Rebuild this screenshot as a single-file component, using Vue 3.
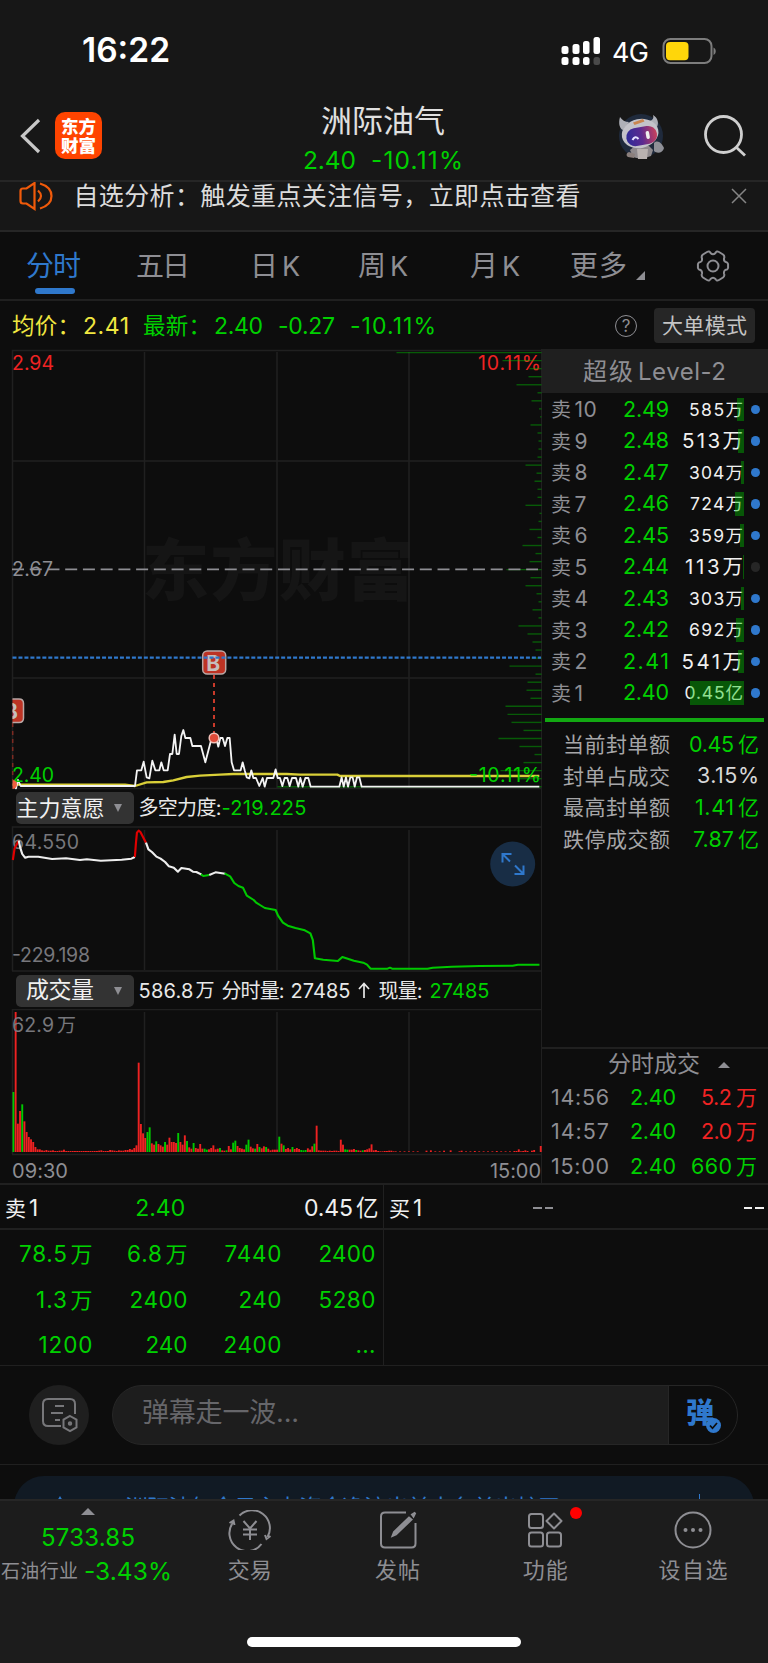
<script setup>
// Tracks a label so that it fills the given width exactly.
const vFit = {
  mounted(el, { value }) {
    const n = [...el.textContent.trim()].length
    const gap = n > 1 ? (value - el.getBoundingClientRect().width) / (n - 1) : 0
    el.style.letterSpacing = gap + 'px'
    el.style.marginRight = -gap + 'px'
  }
}

const asks = [
  { n: '10', p: '2.49', q: '585', u: '万', w: 54, bar: 7, small: true, on: true },
  { n: '9', p: '2.48', q: '513', u: '万', w: 61, bar: 6, small: false, on: true },
  { n: '8', p: '2.47', q: '304', u: '万', w: 54, bar: 3.5, small: true, on: true },
  { n: '7', p: '2.46', q: '724', u: '万', w: 53, bar: 9, small: true, on: true },
  { n: '6', p: '2.45', q: '359', u: '万', w: 54, bar: 4, small: true, on: true },
  { n: '5', p: '2.44', q: '113', u: '万', w: 58, bar: 1, small: false, on: false },
  { n: '4', p: '2.43', q: '303', u: '万', w: 54, bar: 3.5, small: true, on: true },
  { n: '3', p: '2.42', q: '692', u: '万', w: 54, bar: 8, small: true, on: true },
  { n: '2', p: '2.41', q: '541', u: '万', w: 61.5, bar: 6, small: false, on: true },
  { n: '1', p: '2.40', q: '0.45', u: '亿', w: 58.5, bar: 54, small: true, on: true }
]
const stats = [
  { k: '当前封单额', v: '0.45', u: '亿', w: 45, c: 'green' },
  { k: '封单占成交', v: '3.15%', u: '', w: 62, c: 'light' },
  { k: '最高封单额', v: '1.41', u: '亿', w: 39, c: 'green' },
  { k: '跌停成交额', v: '7.87', u: '亿', w: 41, c: 'green' }
]
const trades = [
  { t: '14:56', q: '5.2', w: 31, c: 'red' },
  { t: '14:57', q: '2.0', w: 31, c: 'red' },
  { t: '15:00', q: '660', w: 41, c: 'green' }
]
const orders = [
  { v: '78.5', u: '万', w: 48 }, { v: '6.8', u: '万', w: 35 }, { v: '7440', u: '', w: 57 }, { v: '2400', u: '', w: 57 },
  { v: '1.3', u: '万', w: 31 }, { v: '2400', u: '', w: 58 }, { v: '240', u: '', w: 43 }, { v: '5280', u: '', w: 57 },
  { v: '1200', u: '', w: 54 }, { v: '240', u: '', w: 42 }, { v: '2400', u: '', w: 58 }, { v: '...', u: '', w: 20 }
]

// Volume-at-price bar lengths, top price to bottom price.
const profile = [145, 39, 12, 13, 25, 4, 10, 2.5, 1.5, 11, 4, 3, 3, 4, 16, 5, 7, 4, 4, 16, 2, 3, 12, 4, 19, 6, 12, 35, 11, 16, 5, 3, 9, 3, 23, 14, 9, 6, 10, 32, 6, 14, 15, 11, 36, 34, 30, 18, 43, 22, 7, 18, 41, 23, 264]

// Minute volumes: slot, height, rising or falling.
const raw = '0g180 1r420 2r85 3r123 4g143 5r92 6r60 7r45 8r38 9r30 10r15 11r8 12r8 13r5 14r4 15r6 16r4 17r4 18r5 19r3 20r3 21r4 22r4 23r7 24r3 25r3 26r3 27r3 28r3 29r3 30r3 31r3 32r3 33r3 34r3 35r3 36r3 37r3 38r3 39r4 40r5 41r3 42r3 43r3 44r6 45r5 46r4 47r3 48r5 49r4 50r4 51r6 52r6 53r9 54r7 55r12 56r20 57r268 58r84 59r56 60r42 61g60 62g74 63r26 64r22 65g32 66r24 67r20 68r16 69g30 70r22 71r43 72r30 73r30 74r27 75g57 76r30 77r22 78r50 79g33 80r14 81r10 82g27 83r12 84r10 85r24 86r10 87g10 88g7 89r8 90r12 91r20 92r8 93r10 94g12 95r5 96r4 97g5 98r18 99r8 100g28 101g34 102r18 103r12 104r10 105r8 106g22 107g37 108r16 109r11 110g10 111r24 112g15 113r11 114r17 115g15 116r10 117r5 118r7 119r7 120r7 121g46 122r25 123g20 124r9 125r12 126r8 127g15 128r9 129r12 130r9 131g6 132g5 133g6 134r11 135r7 136r17 137g25 138r79 139r5 140r4 141r4 142r4 143r3 144r4 145r3 146r4 147r4 148r3 149r37 150r22 151g8 152g7 153r7 154r7 155r9 156g6 157r5 158r4 159g5 160r6 161r8 162r11 163r23 164r5 165r6 166r3 167r2 168r2 169r3 170r3 171r4 172r4 173r2 174r2 176r2 178r2 180r2 182r2 184r2 188r4 190r5 192r2 194r2 196r4 199r5 203r2 204r4 206r2 208r2 210r3 212r2 214r2 216r2 218r2 220r3 222r2 224r2 226r2 228r3 229r3 230r8 231r2 232r3 233r5 234r3 236r4 237r6 240r18'
const volumes = raw.split(' ').map((s) => {
  const m = s.match(/(\d+)([rg])(\d+)/)
  return { x: 12.5 + m[1] * 2.197, h: m[3] / 3, up: m[2] === 'r' }
})
</script>

<template>
  <div class="screen">
    <div class="status">
      <span class="clock" v-fit="87">16:22</span>
      <svg class="signal" width="42" height="30" viewBox="560 36 42 30">
        <g fill="#fff">
          <rect x="561.500" y="46" width="7" height="8" rx="2.500" /><rect x="572.500" y="44" width="7" height="10" rx="2.500" />
          <rect x="583" y="41" width="6.500" height="13" rx="2.500" /><rect x="593.500" y="37" width="6.500" height="17" rx="2.500" />
          <rect x="561.500" y="57" width="7" height="8" rx="2.500" /><rect x="572.500" y="57" width="7" height="8" rx="2.500" />
          <rect x="583" y="57" width="6.500" height="8" rx="2.500" />
        </g>
        <rect x="593.500" y="57" width="6.500" height="8" rx="2.500" fill="#4a4a4a" />
      </svg>
      <span class="net" v-fit="37">4G</span>
      <svg class="battery" width="56" height="28" viewBox="662 37 56 28">
        <rect x="663.500" y="39" width="48" height="24" rx="7" fill="none" stroke="#7d7d7d" stroke-width="2" />
        <rect x="666" y="42" width="22.500" height="18.300" rx="4" fill="#ffd60a" />
        <path d="M713.500 47.500c3 1.500 3 6 0 7.500z" fill="#7d7d7d" />
      </svg>
    </div>

    <header class="header">
      <svg class="back" width="22" height="40" viewBox="20 116 22 40"><path d="M39 120 22.500 136 39 152" fill="none" stroke="#c8c8c8" stroke-width="3.200" /></svg>
      <div class="logo"><span>东方</span><span>财富</span></div>
      <div class="title">
        <span class="name" v-fit="124">洲际油气</span>
        <span class="quote green"><span v-fit="53">2.40</span><span v-fit="92">-10.11%</span></span>
      </div>
      <svg class="robot" width="50" height="50" viewBox="616 111 50 50">
        <circle cx="641" cy="136" r="22" fill="#1f2a3c" />
        <path d="M630 150l5-4h14l4 4-2 6q-10 4-18 1z" fill="#8f8a8d" />
        <path d="M637 149h11l-1 10h-9z" fill="#b9b2b0" />
        <path d="M629 152c-3 1-3 4-1 5l6 1 1-4z" fill="#8b7f7c" />
        <path d="M654 143c4-4 8 1 10 5-1 5-7 6-10 3z" fill="#8f9097" />
        <path d="M620 117c-2 7 0 12 3 13l6-8c-4 0-7-2-9-5z" fill="#aeb0b8" />
        <path d="M653 115c5 3 6 8 4 12l-7-6c3-1 4-3 3-6z" fill="#aeb0b8" />
        <ellipse cx="640" cy="133.500" rx="18.500" ry="14.500" transform="rotate(-12 640 133)" fill="#c3c3ca" />
        <rect x="626" y="127" width="31" height="18" rx="9" transform="rotate(-10 642 135)" fill="url(#visor)" />
        <path d="M633 122.500l10-3.500 1.500 2.500-10 3.500z" fill="#c98550" />
        <path d="M632.500 140q2.500-5 6-1" fill="none" stroke="#e6e0ff" stroke-width="2" />
        <rect x="646" y="131" width="3.500" height="8" rx="1.700" transform="rotate(-10 648 135)" fill="#eee" />
        <defs><linearGradient id="visor"><stop offset="0" stop-color="#2e2b98" /><stop offset=".5" stop-color="#5b2a90" /><stop offset="1" stop-color="#c8405c" /></linearGradient></defs>
      </svg>
      <svg class="search" width="46" height="46" viewBox="702 112 46 46" fill="none" stroke="#cfcfcf" stroke-width="2.800"><circle cx="723.500" cy="134.500" r="18" /><path d="m736 147 9 8.500" /></svg>
    </header>

    <div class="notice">
      <svg width="34" height="30" viewBox="19 182 34 30" fill="none" stroke="#f05a0a" stroke-width="2.200">
        <path d="M34.500 183v26l-8-5.500h-3.500q-2.500 0-2.500-2.500v-10q0-2.500 2.500-2.500h3.500z" /><path d="M38 190.500q6 5.500 0 11M40 183.500q11.500 3.500 11.500 12.500T40 208.500" />
      </svg>
      <span class="msg" v-fit="507">自选分析：触发重点关注信号，立即点击查看</span>
      <svg width="16" height="16" viewBox="0 0 16 16" stroke="#858585" stroke-width="1.500"><path d="M1 1l14 14M15 1 1 15" /></svg>
    </div>

    <nav class="tabs">
      <span class="tab active"><span v-fit="55">分时</span></span>
      <span class="tab t2"><span v-fit="54">五日</span></span>
      <span class="tab t3">日<b>K</b></span>
      <span class="tab t4">周<b>K</b></span>
      <span class="tab t5">月<b>K</b></span>
      <span class="tab t6"><span v-fit="57">更多</span></span>
      <svg class="corner" width="9" height="9" viewBox="0 0 9 9"><path d="M9 0v9H0z" fill="#8e8e93" /></svg>
      <svg class="gear" width="36" height="34" viewBox="-18 -17 36 34" fill="none" stroke="#8e8e93" stroke-width="2">
        <path d="M-6-14Q-3.500-15.500-2.500-13 0-10.500 2.500-13 3.500-15.500 6-14L10-11.500Q12-10 11-7.500 10.500-4 14-3.500 15.500-2.500 15 0 15.500 2.500 14 3.500 10.500 4 11 7.500 12 10 10 11.500L6 14Q3.500 15.500 2.500 13 0 10.500-2.500 13-3.500 15.500-6 14L-10 11.500Q-12 10-11 7.500-10.500 4-14 3.500-15.500 2.500-15 0-15.500-2.500-14-3.500-10.500-4-11-7.500-12-10-10-11.500Z" />
        <circle r="5.500" />
      </svg>
    </nav>

    <div class="summary">
      <span class="yellow c1"><span v-fit="68">均价：</span></span>
      <span class="yellow c2"><span v-fit="46">2.41</span></span>
      <span class="green c3"><span v-fit="68">最新：</span></span>
      <span class="green c4"><span v-fit="49">2.40</span></span>
      <span class="green c5"><span v-fit="57">-0.27</span></span>
      <span class="green c6"><span v-fit="86">-10.11%</span></span>
      <span class="help">?</span>
      <span class="mode"><span v-fit="85">大单模式</span></span>
    </div>

    <main class="market">
      <section class="charts">
        <svg class="price" width="542" height="441" viewBox="0 349 542 441">
          <text class="mark" x="142" y="595" textLength="272">东方财富</text>
          <g class="grid"><path d="M12.500 789V350.500H541M12 461H541M12 678H541M144.500 352V788M277 352V788M409 352V788M12 788.500H541" /></g>
          <g class="axis">
            <text x="12" y="369.500" textLength="42" fill="#f02323">2.94</text>
            <text x="478" y="369.500" textLength="63" fill="#f02323">10.11%</text>
            <text x="12" y="575.500" textLength="41" fill="#8e8e93">2.67</text>
          </g>
          <g stroke="#00c800" stroke-opacity=".42" stroke-width="1.400">
            <path v-for="(w, i) in profile" :key="i" :d="`M${541.5 - w} ${352.6 + i * 8.039}H541.5`" />
          </g>
          <path d="M12 569.300H538" stroke="#8e8e93" stroke-width="1.700" stroke-dasharray="12 5.730" />
          <path d="M214 675V733" stroke="#c93a2a" stroke-width="2" stroke-dasharray="4 4" />
          <path d="M12.700 723V780" stroke="#7d2a22" stroke-width="1.500" stroke-dasharray="4 4" />
          <g transform="translate(0 600) scale(.33333)" fill="none" stroke-linejoin="round">
            <path d="M38 554H375L405 558 440 547 490 546 520 541 560 531 600 527 660 524 700 522H860L900 524H1012L1020 528H1618" stroke="#d9cf38" stroke-width="7" />
            <path d="M42 558 48 565 54 540 62 558H405L411 511H424L431 485 440 532 448 535 457 482 466 511H478L484 487 491 511H503L510 462H517L524 404 530 462H537L544 408 550 390 556 414H571L577 438H603L616 487 632 425 642 414 650 420 655 440 661 414H668L675 438 682 414H689L695 487 702 511H722L728 487 734 511 740 532 748 535 754 511 760 534H768L778 558 788 534 794 560 801 534H820L827 508 833 534H840L847 558 854 534H862L869 558 876 534H888L895 560 901 534 908 560 916 534 925 534 932 560H940L945 560H1018L1025 532 1031 560 1038 532 1044 560 1051 532H1058L1064 560 1071 532H1078L1085 560H1618" stroke="#f4f4f4" stroke-width="5.500" />
          </g>
          <g class="axis">
            <text x="12" y="781.500" textLength="42" fill="#00d000">2.40</text>
            <text x="469" y="781.500" textLength="72" fill="#00d000">-10.11%</text>
          </g>
          <g stroke="#b9a7a5" stroke-width="1.500" fill="#bd3324">
            <rect x="202.700" y="651" width="23" height="23" rx="4.500" />
            <path d="M12.500 699H19q4.500 0 4.500 4.500v14.500q0 4.500-4.500 4.500H12.500" />
            <circle cx="214" cy="738" r="4.800" fill="#e04a38" stroke="#f0c0b8" />
            <path d="M12.500 780a4.500 4.500 0 0 1 0 9z" fill="#f06040" stroke="none" />
          </g>
          <clipPath id="plot"><rect x="12.500" y="650" width="500" height="120" /></clipPath>
          <g class="badge" clip-path="url(#plot)"><text x="206.300" y="671">B</text><text x="4" y="719">B</text></g>
          <path d="M12.500 657.700H541" stroke="#2f78cc" stroke-width="2.300" stroke-dasharray="4 1.970" />
        </svg>

        <div class="bar-row">
          <span class="select"><span class="zl" v-fit="88">主力意愿</span><i></i></span>
          <span class="info"><span v-fit="83">多空力度:</span><span class="green" v-fit="85">-219.225</span></span>
        </div>

        <svg class="force" width="542" height="146" viewBox="0 826 542 146">
          <g class="grid"><path d="M12.500 971V827H541M144.500 830V970M277 830V970M409 830V970M12 971H541" /></g>
          <g class="axis" fill="#77777c"><text x="12" y="849" textLength="67">64.550</text><text x="12" y="962" textLength="78">-229.198</text></g>
          <g transform="translate(0 790) scale(.34758 .33333)" fill="none" stroke-width="6.200" stroke-linejoin="round">
            <path d="M37 210 42 175 54 152" stroke="#e00000" />
            <path d="M54 152 58 172 64 192 72 203 82 200 110 200 150 207 190 205 230 210 250 208 290 212 350 209 378 206 388 201" stroke="#eee" />
            <path d="M388 201 391 160 394 128 399 122 404 126 420 158" stroke="#e00000" />
            <path d="M420 158 427 178 437 186 450 200 462 206 475 216 486 229 500 233 512 245 522 234 545 238 555 245 565 246 580 254" stroke="#eee" />
            <path d="M578 253 585 258 602 255" stroke="#00c800" />
            <path d="M602 255 620 247 648 251" stroke="#eee" />
            <path d="M646 250 662 259 674 279 686 288 699 293 710 317 730 330 737 338 748 345 762 354 793 360 800 377 814 398 828 407 850 414 877 421 893 430 900 450 906 505 930 509 972 513 985 501 1018 512 1045 518 1056 524 1066 536H1115L1122 533 1128 536H1230L1245 533 1300 530 1380 528 1475 527 1490 524 1552 524" stroke="#00c800" />
          </g>
          <circle cx="512.700" cy="864" r="22.500" fill="#182d45" />
          <path d="M502.500 862.500v-8.500h9M503 854.500l7 7M523.500 865.500v8.500h-9M523 873.500l-8-8" fill="none" stroke="#2f78cc" stroke-width="2" />
        </svg>

        <div class="bar-row second">
          <span class="select"><span class="cj" v-fit="68">成交量</span><i></i></span>
          <span class="info vol">
            <span v-fit="55">586.8</span><span class="v1">万</span><span class="v2" v-fit="63">分时量:</span>
            <span class="v3" v-fit="60">27485</span><svg class="up" width="14" height="17" viewBox="0 0 14 17" fill="none" stroke="#e8e8e8" stroke-width="1.700"><path d="M7 16V2M2 7 7 1.500 12 7" /></svg>
            <span class="v4" v-fit="44">现量:</span><span class="v5 green" v-fit="60">27485</span>
          </span>
        </div>

        <svg class="volume" width="542" height="147" viewBox="0 1009 542 147">
          <g class="grid"><path d="M12.500 1154V1009.500H541M144.500 1012V1152M277 1012V1152M409 1012V1152M12 1154.500H541" /></g>
          <rect v-for="v in volumes" :key="v.x" :x="v.x" :y="1152 - v.h" width="1.900" :height="v.h" :fill="v.up ? '#ee2222' : '#00c800'" />
          <g class="axis" fill="#77777c"><text x="12" y="1031.500" textLength="42">62.9</text><text class="wan" x="57" y="1032">万</text></g>
        </svg>
        <div class="times"><span v-fit="56">09:30</span><span v-fit="51">15:00</span></div>
      </section>

      <aside class="book">
        <div class="level"><span v-fit="50">超级</span><span class="lv" v-fit="88">Level-2</span></div>
        <div v-for="a in asks" :key="a.n" class="ask">
          <span class="lab">卖<b>{{ a.n }}</b></span>
          <span class="p green"><span v-fit="46">{{ a.p }}</span></span>
          <span class="q" :class="{ small: a.small }"><span v-fit="a.w">{{ a.q }}{{ a.u }}</span><i class="depth" :style="{ width: a.bar + 'px' }"></i></span>
          <i class="dot" :class="{ off: !a.on }"></i>
        </div>
        <div class="limit"></div>
        <div v-for="s in stats" :key="s.k" class="stat">
          <span class="k" v-fit="107">{{ s.k }}</span>
          <span class="v" :class="s.c"><span v-fit="s.w">{{ s.v }}</span><em v-if="s.u">{{ s.u }}</em></span>
        </div>
        <div class="trades">
          <div class="thead"><span v-fit="92">分时成交</span><i></i></div>
          <div v-for="t in trades" :key="t.t" class="trade">
            <span class="t"><span v-fit="58">{{ t.t }}</span></span>
            <span class="tp green"><span v-fit="46">2.40</span></span>
            <span class="tq" :class="t.c"><span v-fit="t.w">{{ t.q }}</span><em>万</em></span>
          </div>
        </div>
      </aside>
    </main>

    <section class="queue">
      <div class="side left">
        <div class="qhead">
          <span class="ql">卖<b>1</b></span><span class="green qp"><span v-fit="50">2.40</span></span>
          <span class="qq"><span v-fit="49">0.45</span><em>亿</em></span>
        </div>
        <div class="cells green">
          <span v-for="(o, i) in orders" :key="i"><span v-fit="o.w">{{ o.v }}</span><em v-if="o.u">{{ o.u }}</em></span>
        </div>
      </div>
      <div class="side">
        <div class="qhead"><span class="ql">买<b>1</b></span><span class="none"><i></i><i></i></span><span class="none bright"><i></i><i></i></span></div>
      </div>
    </section>

    <section class="chat">
      <div class="round">
        <svg width="38" height="36" viewBox="0 0 38 36" fill="none" stroke="#77777a" stroke-width="2">
          <path d="M34 17V7q0-5-5-5H7Q2 2 2 7v17q0 5 5 5h13M14 9h9M10 16h12M14 23h5" />
          <path d="m29 19 6.500 3.700v7.600L29 34l-6.500-3.700v-7.600z" /><circle cx="29" cy="26.500" r="1.200" />
        </svg>
      </div>
      <div class="field"><span class="hint" v-fit="157">弹幕走一波...</span>
        <span class="send">弹<svg width="15" height="15" viewBox="0 0 15 15"><circle cx="7.500" cy="7.500" r="7.500" fill="#2f78cc" /><path d="m4 7.500 2.500 2.800L11 5" fill="none" stroke="#0d0d0d" stroke-width="1.700" /></svg></span>
      </div>
    </section>

    <section class="feed"><div class="card"><i class="pin"></i><span class="headline" v-fit="436">洲际油气今日主力资金净流出前十名单出炉了</span><b></b></div></section>

    <footer class="dock">
      <div class="index">
        <i></i>
        <span class="num green" v-fit="94">5733.85</span>
        <div class="sector"><span v-fit="77">石油行业</span><span class="chg green" v-fit="88">-3.43%</span></div>
      </div>
      <div class="item">
        <svg width="44" height="40" viewBox="-22 -20 44 40" fill="none" stroke="#8e8e93" stroke-width="2">
          <path d="M-10.500-14.500A17.800 17.800 0 0 1 17.500 7M11.500 14A17.800 17.800 0 0 1-17-7.500M-20.500-7l4-2.500 1 4.500M20.500 6l-4 3-1.500-4M-6.500-9 0-1.500 6.500-9M0-1.500V10M-7-.5H7M-7 4.500H7" />
        </svg><span v-fit="44">交易</span>
      </div>
      <div class="item">
        <svg width="44" height="40" viewBox="-22 -20 44 40" fill="none" stroke="#8e8e93" stroke-width="2">
          <path d="M8-17.500H-13q-4 0-4 4v27q0 4 4 4h26.500q4 0 4-4V-7" /><path d="m11-12.500 2.500 2L-2 4.500l-3.500 1.500 1.500-4z" fill="#8e8e93" /><path d="m14-15.500 2.500-1.500.500.500-1.500 3z" fill="#8e8e93" />
        </svg><span v-fit="45">发帖</span>
      </div>
      <div class="item">
        <svg width="44" height="40" viewBox="-22 -20 44 40" fill="none" stroke="#8e8e93" stroke-width="2">
          <rect x="-16" y="-16" width="14" height="14" rx="2.500" /><rect x="-16" y="2.500" width="14" height="14" rx="2.500" /><rect x="2" y="2.500" width="14" height="14" rx="2.500" /><path d="m9-16.500 7.500 7.500L9-1.500 1.500-9z" stroke-linejoin="round" />
        </svg><i class="alert"></i><span v-fit="45">功能</span>
      </div>
      <div class="item">
        <svg width="44" height="40" viewBox="-22 -20 44 40" fill="none" stroke="#8e8e93" stroke-width="2"><circle r="17.500" /><g fill="#8e8e93" stroke="none"><circle cx="-7.500" r="2" /><circle r="2" /><circle cx="7.500" r="2" /></g></svg><span v-fit="69">设自选</span>
      </div>
      <div class="home"></div>
    </footer>
  </div>
</template>

<style>
body { background: #0d0d0d; }
</style>

<style scoped>
.screen { width: 768px; height: 1663px; overflow: hidden; background: #0d0d0d; color: #e8e8e8; font-family: Inter, "Noto Sans CJK SC", sans-serif; line-height: 1; display: flex; flex-direction: column; white-space: nowrap; }
.screen span { display: inline-block; }
.screen > * { flex: none; box-sizing: border-box; }
em, i { font-style: normal; }
b { font-weight: 400; }
.screen .green { color: #00d000; }
.screen .red { color: #f02323; }
.yellow { color: #f0e640; }
.light { color: #d8d8d8; }

.status { height: 100px; background: #171717; display: flex; align-items: center; padding: 2px 0 0 82px; }
.clock { font-size: 33.500px; font-weight: 600; color: #fff; width: 87px; }
.signal { margin-left: 391px; }
.net { font-size: 27px; font-weight: 400; color: #fff; margin-left: 10px; padding-top: 3px; }
.battery { margin-left: auto; margin-right: 50px; }

.header { height: 80px; background: #171717; display: flex; align-items: center; padding: 0 20px; }
.back { margin-top: -8px; }
.logo { width: 47px; height: 47px; border-radius: 10px; background: #ff4400; margin: -9px 0 0 13px; display: flex; flex-direction: column; align-items: center; justify-content: center; font-weight: 900; font-size: 17.500px; line-height: 19px; color: #fff; }
.title { flex: 1; display: flex; flex-direction: column; align-items: center; padding-left: 48px; }
.name { font-size: 31px; line-height: 36px; color: #e0e0e0; margin-top: -2px; }
.quote { font-size: 24.500px; line-height: 30px; display: flex !important; gap: 15px; margin-top: 6px; }
.robot { margin: -8px 36px 0 0; }
.search { margin-top: -10px; }

.notice { height: 52px; background: #171717; border-top: 2px solid #262626; border-bottom: 2px solid #262626; display: flex; align-items: flex-start; padding: 0 21px 0 19px; }
.notice svg:last-child { margin: 6px 0 0 auto; }
.msg { font-size: 25px; line-height: 28px; margin-left: 20.500px; color: #dcdcdc; }

.tabs { height: 69px; border-bottom: 2px solid #202020; display: flex; align-items: flex-start; padding: 19px 0 0 26px; color: #8e8e93; font-size: 28px; line-height: 30px; }
.tabs b { margin-left: 4px; font-size: 27px; }
.tab { position: relative; }
.active { color: #2f78cc; width: 110px; }
.active::after { content: ""; position: absolute; left: 9px; top: 37px; width: 40px; height: 6px; border-radius: 3px; background: #2f78cc; }
.t2 { width: 114px; }
.t3 { width: 108px; }
.t4 { width: 112px; }
.t5 { width: 100px; }
.t6 { width: 66px; }
.corner { margin-top: 20px; }
.gear { margin: -2px 0 0 50px; }

.summary { height: 48px; display: flex; align-items: center; padding: 2px 0 0 12px; font-size: 23px; }
.c1 { width: 71px; }
.c2 { width: 60px; }
.c3 { width: 71px; }
.c4 { width: 64px; }
.c5 { width: 72px; }
.c1, .c3 { font-size: 22.500px; }
.help { width: 20px; height: 20px; border: 1.500px solid #8e8e93; border-radius: 50%; color: #8e8e93; font-size: 17px; line-height: 21px; text-align: center; margin: -1px 0 0 auto; }
.mode { width: 101px; height: 35px; border-radius: 4px; background: #262626; color: #c4c4c4; font-size: 21px; line-height: 35px; text-align: center; margin: -1px 13px 0 17px; }

.market { height: 836px; display: flex; border-bottom: 2px solid #202020; }
.charts { width: 542px; box-sizing: border-box; border-right: 1px solid #202020; display: flex; flex-direction: column; }
.charts > svg { display: block; flex: none; }
.grid { fill: none; stroke: #202020; stroke-width: 1.500; }
.axis { font-size: 19.500px; }
.wan { font-size: 19px; }
.mark { font-size: 67px; font-weight: 900; fill: #151515; }
.badge { font-size: 21px; font-weight: 700; fill: #c6bebc; }
.bar-row { height: 36px; flex: none; display: flex; align-items: center; padding-left: 16px; }
.second { height: 37px; }
.select { width: 118px; height: 32px; border-radius: 5px; background: #333; display: flex !important; align-items: center; color: #f0f0f0; font-size: 22px; box-sizing: border-box; position: relative; }
.select i { position: absolute; left: 98px; top: 12px; border: 4.500px solid transparent; border-top: 8px solid #8e8e93; border-bottom: 0; }
.zl { margin-left: .500px; }
.cj { margin-left: 10px; font-size: 23px; }
.info { display: flex !important; align-items: center; margin-left: 4.500px; font-size: 20px; }
.v1 { font-size: 19px; margin-left: 2px; }
.v2 { margin-left: 7px; }
.v3 { margin-left: 6px; }
.up { margin-left: 6px; }
.v4 { margin-left: 8px; }
.v5 { margin-left: 7px; }
.times { display: flex; justify-content: space-between; padding: 5px 0 0 12px; font-size: 20px; color: #8e8e93; }

.book { width: 226px; display: flex; flex-direction: column; }
.level { height: 44px; background: #1f1f1f; color: #8e8e93; font-size: 24px; display: flex; align-items: center; padding: 2px 0 0 41px; box-sizing: border-box; flex: none; margin-bottom: .800px; }
.lv { margin-left: 5px; }
.ask { height: 31.500px; flex: none; display: flex; align-items: center; padding-left: 9px; }
.lab { width: 72px; color: #8e8e93; font-size: 20px; }
.lab b { font-size: 21px; margin-left: 3.500px; letter-spacing: .5px; }
.p { width: 46px; font-size: 21.500px; text-align: right; }
.q { width: 74px; height: 23.500px; line-height: 23.500px; text-align: right; font-size: 20.500px; color: #f0f0f0; position: relative; }
.q.small { font-size: 17.500px; }
.depth { position: absolute; right: -1px; top: 0; height: 100%; background: rgba(0, 200, 0, .4); }
.dot { width: 9.500px; height: 9.500px; border-radius: 50%; background: #2f78cc; margin-left: 7.500px; }
.dot.off { background: #262626; }
.limit { height: 4px; flex: none; background: #12a812; margin: 9.300px 4px 6.700px 3px; }
.stat { height: 31.600px; flex: none; display: flex; align-items: center; justify-content: space-between; padding: 0 9px 0 21px; font-size: 21px; }
.k { color: #a6a6a8; }
.v { font-size: 21.500px; }
em { font-size: 21px; margin-left: 4px; }
.trades { margin-top: auto; border-top: 2px solid #202020; height: 134px; }
.thead { height: 31px; display: flex; align-items: center; padding-left: 66px; color: #8e8e93; font-size: 23px; }
.thead i { border: 6px solid transparent; border-bottom: 6px solid #8e8e93; border-top: 0; margin-left: 18px; }
.trade { height: 34.700px; display: flex; align-items: center; padding-left: 9px; font-size: 21.500px; }
.t { width: 79px; color: #8e8e93; }
.tp { width: 46px; }
.tq { margin-left: auto; padding-right: 11px; }

.queue { height: 181px; display: flex; border-bottom: 1px solid #202020; }
.side { flex: 1; }
.left { border-right: 1.500px solid #202020; flex: none; width: 384px; box-sizing: border-box; }
.qhead { height: 45px; box-sizing: border-box; border-bottom: 2px solid #202020; display: flex; align-items: center; padding: 4px 4.500px 0 5px; font-size: 23px; color: #f0f0f0; }
.ql { font-size: 21px; }
.ql b { font-size: 22.500px; margin-left: 3px; }
.qp { margin-left: 97px; }
.qq { margin-left: auto; }
.qhead em { font-size: 22.500px; margin-left: 3px; }
.none { display: flex !important; gap: 3px; margin: -2px 0 0 111px; }
.none i { width: 8.500px; height: 2px; background: #8e8e93; }
.none.bright { margin-left: auto; }
.none.bright i { background: #f0f0f0; }
.cells { display: grid; grid-template-columns: 92.500px 95px 94px 94px; grid-auto-rows: 45.300px; align-items: center; text-align: right; font-size: 22.500px; padding-top: 2px; }
.cells em { font-size: 22px; margin-left: 3.500px; }

.chat { height: 99px; border-bottom: 1px solid #202020; display: flex; align-items: center; padding-left: 29px; }
.round { width: 60px; height: 60px; border-radius: 50%; background: #1f1f1f; display: flex; align-items: center; justify-content: center; }
.round svg { margin-left: 2px; }
.field { width: 626px; height: 60px; box-sizing: border-box; border-radius: 30px; background: #1d1d1d; border: 1.500px solid #262626; margin-left: 23px; display: flex; align-items: center; overflow: hidden; }
.hint { color: #66666a; font-size: 27px; margin: -6px 0 0 29px; }
.screen .send { margin-left: auto; width: 69px; height: 60px; box-sizing: border-box; padding-left: 17px; background: #0d0d0d; border-left: 1px solid #262626; color: #2f78cc; font-weight: 900; font-size: 28px; line-height: 56px; position: relative; }
.send svg { position: absolute; left: 37px; top: 33px; }

.feed { height: 34px; padding: 11px 14px 0; overflow: hidden; }
.card { height: 60px; border-radius: 30px 30px 0 0; background: #111a24; color: #2f78cc; font-size: 23px; display: flex; padding: 21px 54px 0 43px; }
.pin { border: 3px solid transparent; border-bottom: 5px solid #2f78cc; border-top: 0; height: 0; margin-top: -1px; }
.headline { margin-left: 62px; }
.card b { margin-left: auto; width: 1.500px; height: 12px; background: #2f78cc; margin-top: -3px; }

.dock { height: 165px; background: #1c1c1c; border-top: 2px solid #262626; position: relative; display: flex; }
.index { width: 176px; display: flex; flex-direction: column; align-items: center; }
.index > i { border: 7px solid transparent; border-bottom: 7px solid #8e8e93; border-top: 0; margin-top: 7px; }
.num { font-size: 24px; margin-top: 11px; }
.sector { display: flex; align-items: center; font-size: 19px; color: #8e8e93; margin: 9px 0 0 1px; align-self: flex-start; }
.chg { font-size: 24.500px; margin-left: 6px; }
.item { width: 147.700px; display: flex; flex-direction: column; align-items: center; color: #8e8e93; font-size: 22px; padding-top: 9px; position: relative; }
.item span { margin-top: 9px; }
.alert { position: absolute; left: 99px; top: 6px; width: 12px; height: 12px; border-radius: 50%; background: #f00; }
.home { position: absolute; left: 247px; bottom: 17.500px; width: 274px; height: 10px; border-radius: 5px; background: #fff; }
</style>
